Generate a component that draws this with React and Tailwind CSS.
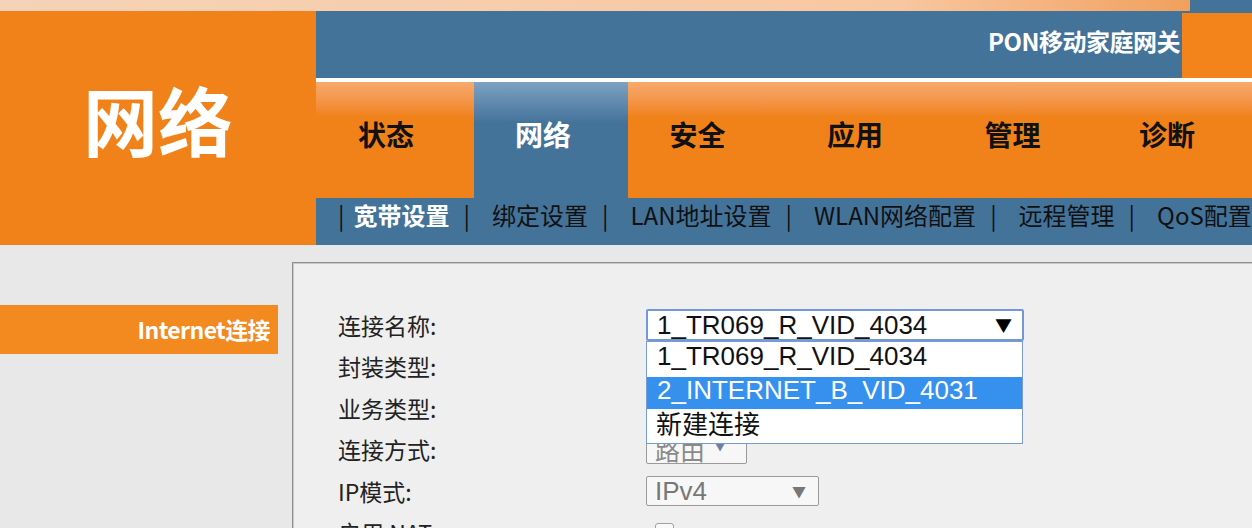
import React from 'react';

const tabs = [
  { name: '状态', w: 'w-[158px]' },
  { name: '网络', w: 'w-[154px]', active: true },
  { name: '安全', w: 'w-[157px]' },
  { name: '应用', w: 'w-[158px]' },
  { name: '管理', w: 'w-[157px]' },
  { name: '诊断', w: 'w-[152px]' },
];

const subNav = ['宽带设置', '绑定设置', 'LAN地址设置', 'WLAN网络配置', '远程管理', 'QoS配置'];

const cjk = { fontFamily: '"Noto Sans CJK SC", "Noto Sans", sans-serif' };
const latin = { fontFamily: '"Liberation Sans", "Noto Sans CJK SC", sans-serif' };

const Label = ({ children }) => (
  <div className="w-[308px] shrink-0 text-[23px] text-[#222]" style={cjk}>
    {children}
  </div>
);

const App = () => {
  return (
    <div className="w-[1252px] h-[528px] overflow-hidden bg-[#e8e8e8] flex flex-col" style={cjk}>
      {/* top decorative strip */}
      <div className="h-[11px] flex shrink-0">
        <div className="flex-1 bg-linear-to-r from-[#f5d3b8] via-[#f8c7a1] via-75% to-[#f1a05c]" />
        <div className="w-[62px] bg-[#44739a]" />
      </div>

      {/* header */}
      <div className="h-[234px] flex shrink-0">
        <div className="w-[316px] bg-[#f08219] flex items-center justify-center pb-[20px]">
          <span className="text-[75px] font-bold text-white leading-none">网络</span>
        </div>

        <div className="flex-1 flex flex-col">
          <div className="h-[67px] bg-[#44739a] flex items-stretch justify-end">
            <div className="flex items-center pb-[8px] pr-[2px] text-[24px] font-bold text-white tracking-[-0.5px]">
              PON移动家庭网关
            </div>
            <div className="w-[70px] mt-[2px] bg-[#f3841b]" />
          </div>
          <div className="h-[4px] bg-white" />

          <div className="h-[116px] flex">
            {tabs.map((t) => (
              <div
                key={t.name}
                className={
                  t.active
                    ? `${t.w} bg-linear-to-b from-[#7ea2c2] via-[#44739a] via-35% to-[#44739a] flex items-center justify-center pb-[12px] pr-[16px] text-[28px] font-bold text-white`
                    : `${t.w} bg-linear-to-b from-[#f7aa6c] via-[#f08219] via-30% to-[#f08219] flex items-center justify-center pb-[12px] pr-[18px] text-[28px] font-bold text-[#111]`
                }
              >
                {t.name}
              </div>
            ))}
          </div>

          <div className="h-[47px] bg-[#44739a] flex items-center pl-[22px] text-[24px] text-[#111] whitespace-nowrap pb-[14px]">
            <span className="mr-[9px]">|</span>
            {subNav.map((s, i) => (
              <React.Fragment key={s}>
                <span className={i === 0 ? 'font-bold text-white' : ''}>{s}</span>
                {i < subNav.length - 1 && <span className="ml-[14px] mr-[22px]">|</span>}
              </React.Fragment>
            ))}
          </div>
        </div>
      </div>

      {/* body */}
      <div className="flex-1 flex">
        <div className="w-[278px] shrink-0 pt-[60px]">
          <div className="h-[49px] bg-[#f28a1f] flex items-center justify-end pr-[8px] text-[23px] font-bold text-white tracking-[-0.6px]">
            Internet连接
          </div>
        </div>

        <div className="flex-1 ml-[14px] mt-[17px] bg-[#efefef] border-l border-t border-[#8e8e8e] shadow-[inset_1px_1px_0_#c9c9c9] pl-[45px] pt-[41px]">
          <div className="h-[41.5px] flex items-center">
            <Label>连接名称:</Label>
            <div className="relative">
              <div className="w-[378px] h-[32px] bg-white border-2 border-[#7398d6] rounded-[2px] flex items-center justify-between pl-[9px] pr-[10px]">
                <span className="text-[26px] text-[#111] leading-none" style={latin}>1_TR069_R_VID_4034</span>
                <span className="text-[17px] text-black leading-none">▼</span>
              </div>
              <div className="absolute left-0 top-full w-[377px] bg-white border border-[#7a9bd2] z-10" style={latin}>
                <div className="h-[35px] flex items-center pl-[10px] pb-[6px] text-[26px] text-[#111]">1_TR069_R_VID_4034</div>
                <div className="h-[32px] flex items-center pl-[10px] pb-[5px] text-[26px] text-white bg-[#3590ee]">2_INTERNET_B_VID_4031</div>
                <div className="h-[34px] flex items-center pl-[9px] pb-[6px] text-[26px] text-[#111]" style={cjk}>新建连接</div>
              </div>
            </div>
          </div>

          <div className="h-[41.5px] flex items-center">
            <Label>封装类型:</Label>
          </div>

          <div className="h-[41.5px] flex items-center">
            <Label>业务类型:</Label>
          </div>

          <div className="h-[41.5px] flex items-center">
            <Label>连接方式:</Label>
            <div className="w-[101px] h-[30px] bg-[#f7f7f7] border border-[#9a9a9a] rounded-[2px] flex items-center pl-[8px] gap-[8px]">
              <span className="text-[25px] text-[#8a8a8a] leading-none">路由</span>
              <span className="text-[14px] text-[#6f7fa6] leading-none -mt-[10px]">▼</span>
            </div>
          </div>

          <div className="h-[41.5px] flex items-center">
            <Label>IP模式:</Label>
            <div className="w-[173px] h-[30px] bg-[#f7f7f7] border border-[#9a9a9a] rounded-[2px] flex items-center justify-between pl-[8px] pr-[12px]">
              <span className="text-[26px] text-[#777] leading-none" style={latin}>IPv4</span>
              <span className="text-[14px] text-[#777] leading-none">▼</span>
            </div>
          </div>

          <div className="h-[41.5px] flex items-center">
            <Label>启用 NAT:</Label>
            <div className="ml-[9px] w-[19px] h-[19px] bg-[#f9f9f9] border border-[#a0a0a0] rounded-[3px]" />
          </div>
        </div>
      </div>
    </div>
  );
};

export default App;
